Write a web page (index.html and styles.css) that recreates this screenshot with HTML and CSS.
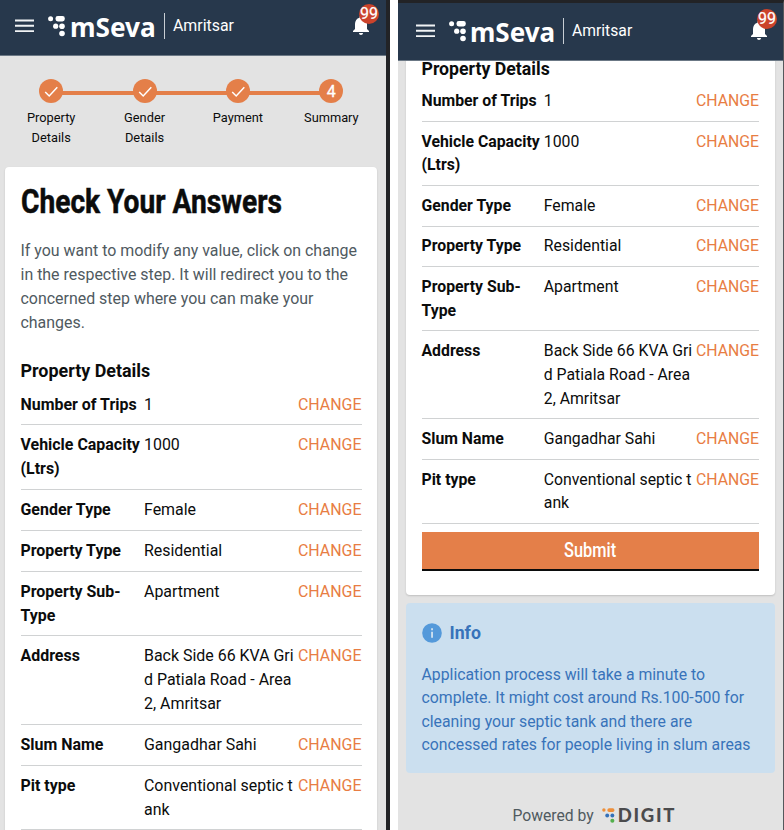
FILE: index.html
```html
<!DOCTYPE html>
<html lang="en">
<head>
<meta charset="utf-8">
<title>mSeva Amritsar</title>
<link rel="stylesheet" href="styles.css">
</head>
<body>
<svg class="defs" aria-hidden="true">
  <symbol id="menu" viewBox="0 0 19 14"><path d="M0 1.500h19M0 6.800h19M0 12.100h19" stroke="#f1f3f5" stroke-width="1.900"/></symbol>
  <symbol id="dots" viewBox="0 0 17 21">
    <circle cx="2.6" cy="2.7" r="2.5"/><rect x="7.5" y="0" width="9.3" height="5.4" rx="2.3"/>
    <circle cx="7.7" cy="10.2" r="2.6"/><circle cx="14" cy="10.2" r="2.8"/><circle cx="14" cy="17.5" r="2.8"/>
  </symbol>
  <symbol id="bell" viewBox="4 2 16 20"><path d="M12 22c1.1 0 2-.9 2-2h-4c0 1.100.89 2 2 2zm6-6v-5c0-3.070-1.640-5.640-4.500-6.320V4c0-.83-.67-1.500-1.500-1.500s-1.500.67-1.500 1.500v.68C7.630 5.360 6 7.920 6 11v5l-2 2v1h16v-1l-2-2z" fill="#fff"/></symbol>
  <symbol id="check" viewBox="0 0 24 24"><path d="M6.200 13l4 4L18.300 8.300" fill="none" stroke="#fff" stroke-width="1.500"/></symbol>
</svg>
<main class="screens">
  <section class="phone left">
    <header class="bar">
      <svg class="menu"><use href="#menu"/></svg>
      <svg class="dots"><use href="#dots"/></svg>
      <span class="brand">mSeva</span><span class="city">Amritsar</span>
      <div class="alerts"><svg class="bell"><use href="#bell"/></svg><span class="badge">99</span></div>
    </header>
    <ol class="steps">
      <li><span class="dot"><svg><use href="#check"/></svg></span>Property<br>Details</li>
      <li><span class="dot"><svg><use href="#check"/></svg></span>Gender<br>Details</li>
      <li><span class="dot"><svg><use href="#check"/></svg></span>Payment</li>
      <li><span class="dot">4</span>Summary</li>
    </ol>
    <div class="card">
      <h1><span>Check Your Answers</span></h1>
      <p class="intro">If you want to modify any value, click on change<br>in the respective step. It will redirect you to the<br>concerned step where you can make your<br>changes.</p>
      <h2>Property Details</h2>
      <dl>
        <div class="row"><dt>Number of Trips</dt><dd>1</dd><a>CHANGE</a></div>
        <div class="row"><dt>Vehicle Capacity<br>(Ltrs)</dt><dd>1000</dd><a>CHANGE</a></div>
        <div class="row"><dt>Gender Type</dt><dd>Female</dd><a>CHANGE</a></div>
        <div class="row"><dt>Property Type</dt><dd>Residential</dd><a>CHANGE</a></div>
        <div class="row"><dt>Property Sub-<br>Type</dt><dd>Apartment</dd><a>CHANGE</a></div>
        <div class="row"><dt>Address</dt><dd>Back Side 66 KVA Gri<br>d Patiala Road - Area<br>2, Amritsar</dd><a>CHANGE</a></div>
        <div class="row"><dt>Slum Name</dt><dd>Gangadhar Sahi</dd><a>CHANGE</a></div>
        <div class="row"><dt>Pit type</dt><dd>Conventional septic t<br>ank</dd><a>CHANGE</a></div>
      </dl>
    </div>
  </section>
  <section class="phone right">
    <header class="bar">
      <svg class="menu"><use href="#menu"/></svg>
      <svg class="dots"><use href="#dots"/></svg>
      <span class="brand">mSeva</span><span class="city">Amritsar</span>
      <div class="alerts"><svg class="bell"><use href="#bell"/></svg><span class="badge">99</span></div>
    </header>
    <div class="card">
      <h2>Property Details</h2>
      <dl>
        <div class="row"><dt>Number of Trips</dt><dd>1</dd><a>CHANGE</a></div>
        <div class="row"><dt>Vehicle Capacity<br>(Ltrs)</dt><dd>1000</dd><a>CHANGE</a></div>
        <div class="row"><dt>Gender Type</dt><dd>Female</dd><a>CHANGE</a></div>
        <div class="row"><dt>Property Type</dt><dd>Residential</dd><a>CHANGE</a></div>
        <div class="row"><dt>Property Sub-<br>Type</dt><dd>Apartment</dd><a>CHANGE</a></div>
        <div class="row"><dt>Address</dt><dd>Back Side 66 KVA Gri<br>d Patiala Road - Area<br>2, Amritsar</dd><a>CHANGE</a></div>
        <div class="row"><dt>Slum Name</dt><dd>Gangadhar Sahi</dd><a>CHANGE</a></div>
        <div class="row"><dt>Pit type</dt><dd>Conventional septic t<br>ank</dd><a>CHANGE</a></div>
      </dl>
      <button class="submit"><span>Submit</span></button>
    </div>
    <aside class="info">
      <h3><svg viewBox="0 0 20 20"><circle cx="10" cy="10" r="9.800" fill="#5499da"/><path d="M9.100 5.300h1.900v1.900H9.100zM9.100 8.800h1.900v6H9.100z" fill="#cbdfef"/></svg>Info</h3>
      <p>Application process will take a minute to<br>complete. It might cost around Rs.100-500 for<br>cleaning your septic tank and there are<br>concessed rates for people living in slum areas</p>
    </aside>
    <footer>Powered by
      <svg viewBox="0 0 12 14"><circle cx="1.700" cy="1.900" r="1.600" fill="#ee8f3a"/><rect x="5" y="0.200" width="6.500" height="3.500" rx="1.500" fill="#ee8f3a"/><circle cx="4.800" cy="7" r="1.800" fill="#3470b8"/><circle cx="9.600" cy="7" r="1.800" fill="#3470b8"/><circle cx="9.600" cy="11.900" r="1.900" fill="#54b04c"/></svg>
      <b>DIGIT</b>
    </footer>
  </section>
</main>
</body>
</html>
```

FILE: styles.css
```css
* { box-sizing: border-box; }
body { margin: 0; background: #fff; color: #0b0c0c; font-family: Roboto, sans-serif; overflow: hidden; }
h1, h2, h3, p, dl, dd, ol { margin: 0; padding: 0; }
.defs { position: absolute; width: 0; height: 0; }
.screens { display: flex; gap: 8px; height: 830px; overflow: hidden; }
.phone { background: #e3e3e3; height: 830px; overflow: hidden; flex: none; }
.left { --fs: 15.95px; --lh: 23.9px; --pad: 7.95px; width: 390px; border-right: 4px solid #222326; }
.right { --fs: 15.8px; --lh: 23.65px; --pad: 7.96px; width: 386px; border-right: 1px solid #55585c; border-top: 3px solid #222326; }
.bar { position: relative; z-index: 2; display: flex; align-items: flex-start; height: 56px; padding: 19px 8px 0 15px; background: #27384c; border-bottom: 1px solid #6b7885; color: #fff; }
.right .bar { height: 58px; padding: 21px 7px 0 18px; }
.menu { width: 19px; height: 14px; flex: none; }
.dots { width: 17px; height: 21px; margin: -3px 0 0 14px; fill: #fff; flex: none; }
.brand { width: 87px; margin: -11px 0 0 5px; font: 700 26.200px/38px "Noto Sans", sans-serif; }
.city { margin: -6px 0 0 7px; padding-left: 8px; border-left: 1px solid #c8ced4; font-size: 15.900px; line-height: 26px; height: 26px; }
.right .brand { width: 86px; font-size: 26px; margin-left: 4px; }
.right .city { font-size: 15.700px; }
.alerts { position: relative; margin: -4px 8px 0 auto; width: 17px; height: 22px; }
.bell { display: block; width: 16px; height: 20px; }
.badge { position: absolute; left: 6px; top: -11px; width: 20px; height: 20px; border-radius: 50%; background: #cb432b; font-size: 16px; line-height: 20px; text-align: center; -webkit-text-stroke: .2px #fff; }
.steps { display: flex; list-style: none; padding: 23px 8px 0 4.500px; height: 111px; font-size: 12.800px; line-height: 19.500px; text-align: center; }
.steps li { flex: 1; position: relative; }
.steps li + li::before { content: ""; position: absolute; z-index: 0; left: -50%; top: 12px; width: 100%; height: 4px; background: #e47f49; }
.dot { position: relative; z-index: 1; display: block; width: 24px; height: 24px; margin: 0 auto 5px; border-radius: 50%; background: #e47f49; color: #fff; font-size: 16px; line-height: 25px; -webkit-text-stroke: .3px #fff; }
.dot svg { display: block; width: 24px; height: 24px; }
.card { background: #fff; border-radius: 4px; box-shadow: 0 1px 2px rgba(0,0,0,.16); }
.left .card { margin: 0 9px 0 5px; padding: 15px 15.500px 0; height: 700px; }
.right .card { margin: -4px 8px 0; padding: 0 16px 0 15.500px; height: 538px; border-radius: 0 0 4px 4px; }
h1 { font-size: 33px; line-height: 40px; white-space: nowrap; -webkit-text-stroke: .5px #0b0c0c; }
h1 span { display: inline-block; transform: scaleX(.853); transform-origin: left; }
.intro { margin-top: 17px; color: #505a5f; font-size: var(--fs); line-height: var(--lh); white-space: nowrap; }
h2 { font-size: 17.900px; line-height: 24px; }
.left h2 { margin-top: 24.500px; }
.right h2 { font-size: 17.700px; }
dl { font-size: var(--fs); line-height: var(--lh); }
.left dl { margin-top: 1.500px; }
.right dl { margin-top: .2px; }
.row { display: grid; grid-template-columns: 123.500px 1fr auto; padding: var(--pad) 0; border-bottom: 1px solid #d0d2d3; white-space: nowrap; }
.right .row { grid-template-columns: 122.300px 1fr auto; }
dt { font-weight: 700; }
.row a { color: #e87d43; }
.submit { display: block; width: 100%; height: 39px; margin-top: 8px; padding: 0; border: 0; border-bottom: 2px solid #0b0c0c; background: #e47f49; color: #fff; font: 500 19.500px/38px Roboto, sans-serif; }
.submit span { display: inline-block; transform: scaleX(.84); }
.info { margin: 8px 8px 0; padding: 18px 15.500px; height: 170px; border-radius: 4px; background: #cbdfef; color: #3873ba; font-size: var(--fs); line-height: var(--lh); white-space: nowrap; }
h3 { display: flex; align-items: center; font-size: 17.700px; line-height: 24px; }
h3 svg { width: 20px; height: 20px; margin-right: 8px; }
.info p { margin-top: 17.500px; }
footer { display: flex; align-items: center; margin: 31px 0 0 114.500px; font-size: 15.700px; line-height: 24px; color: #505a5f; }
footer svg { width: 13px; height: 15px; margin: -2px 0 0 8px; }
footer b { margin: -2px 0 0 3px; color: #4b4b4d; font: 900 18.500px/24px Lato, sans-serif; letter-spacing: 1.700px; }
```
